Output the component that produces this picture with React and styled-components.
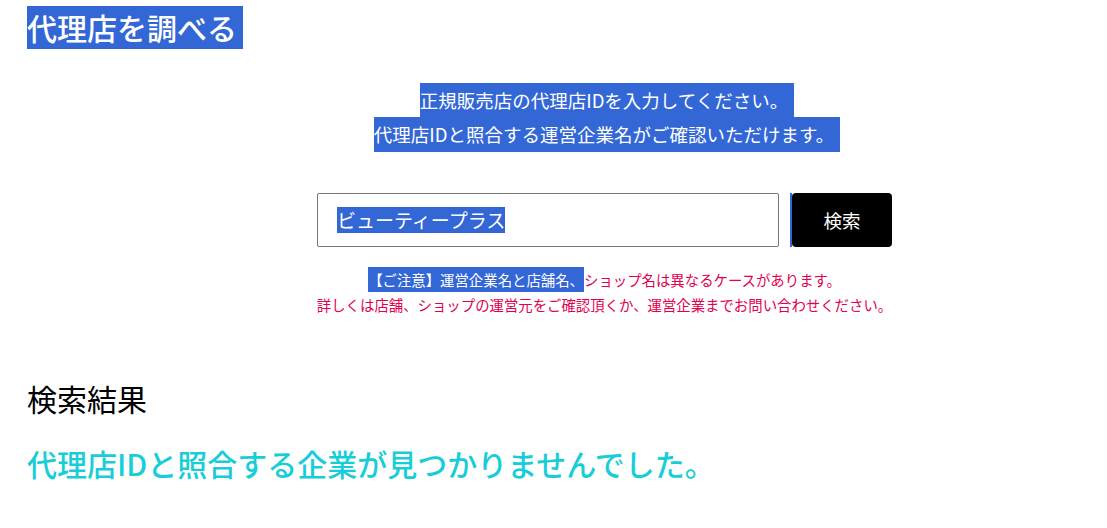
import React from "react";
import styled, { createGlobalStyle } from "styled-components";

const Global = createGlobalStyle`
  html, body { margin: 0; padding: 0; background: #fff; }
  body { font-family: "Noto Sans CJK JP", "Noto Sans", sans-serif; color: #000; }
`;

const SEL = "#3367d6";

const Page = styled.div`
  padding: 6px 0 40px 27px;
  width: 1107px;
  box-sizing: border-box;
`;

const Title = styled.h1`
  margin: 0;
  font-size: 30px;
  font-weight: 500;
  line-height: 43px;
`;

const Highlight = styled.span`
  display: inline-block;
  background: ${SEL};
  color: #fff;
  line-height: ${(p) => p.$lh || "inherit"};
  padding-right: ${(p) => p.$trail || 0}px;
`;

const Center = styled.section`
  padding-left: ${(p) => p.$shift}px;
  text-align: center;
`;

const Intro = styled.div`
  margin-top: 34px;
  font-size: 18.5px;
  line-height: 34.5px;
`;

const Line = styled.div`
  height: ${(p) => p.$h}px;
`;

const Form = styled.form`
  margin-top: 41px;
  display: flex;
  justify-content: center;
  align-items: stretch;
  height: 54px;
`;

const InputBox = styled.div`
  width: 462px;
  box-sizing: border-box;
  border: 1px solid #767676;
  border-radius: 2px;
  display: flex;
  align-items: center;
  padding-left: 19px;
  font-size: 19px;
  text-align: left;
`;

const SelGap = styled.span`
  width: 2px;
  margin-left: 11px;
  background: ${SEL};
`;

const Button = styled.button`
  width: 100px;
  border: none;
  border-radius: 4px;
  background: #000;
  color: #fff;
  font-family: inherit;
  font-size: 18.5px;
  cursor: pointer;
`;

const Note = styled.div`
  margin-top: 20px;
  font-size: 14.4px;
  line-height: 24.5px;
  color: #e2004f;
`;

const ResultHeading = styled.h2`
  margin: 60px 0 0;
  font-size: 30px;
  font-weight: 400;
  line-height: 43px;
`;

const Message = styled.p`
  margin: 23px 0 0;
  font-size: 30px;
  line-height: 40px;
  color: #17ced8;
  font-weight: 500;
`;

export default function App() {
  return (
    <>
      <Global />
      <Page>
        <Title>
          <Highlight $trail={6}>代理店を調べる</Highlight>
        </Title>
        <Center $shift={80}>
          <Intro>
            <Line $h={34}>
              <Highlight $trail={6}>正規販売店の代理店IDを入力してください。</Highlight>
            </Line>
            <Line $h={35}>
              <Highlight $trail={6}>代理店IDと照合する運営企業名がご確認いただけます。</Highlight>
            </Line>
          </Intro>
        </Center>
        <Center $shift={75}>
          <Form onSubmit={(e) => e.preventDefault()}>
            <InputBox>
              <Highlight $lh="26px">ビューティープラス</Highlight>
            </InputBox>
            <SelGap />
            <Button type="submit">検索</Button>
          </Form>
          <Note>
            <div>
              <Highlight $lh="25px">【ご注意】運営企業名と店舗名、</Highlight>
              ショップ名は異なるケースがあります。
            </div>
            <div>詳しくは店舗、ショップの運営元をご確認頂くか、運営企業までお問い合わせください。</div>
          </Note>
        </Center>
        <ResultHeading>検索結果</ResultHeading>
        <Message>代理店IDと照合する企業が見つかりませんでした。</Message>
      </Page>
    </>
  );
}
